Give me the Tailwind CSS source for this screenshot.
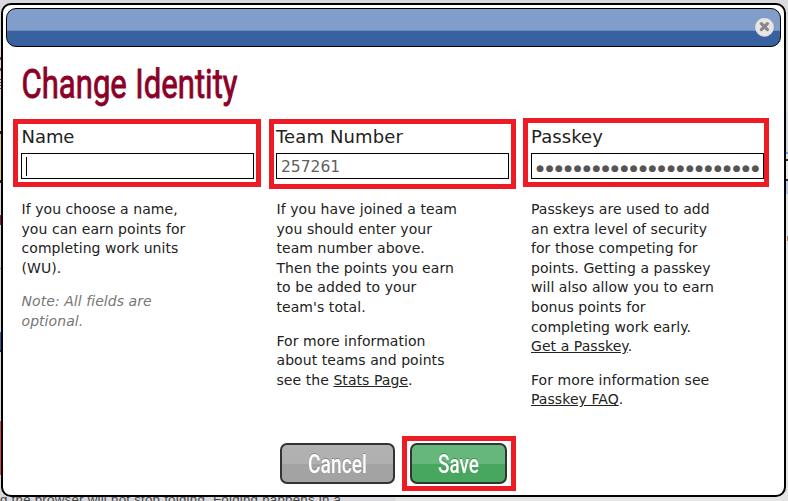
<!DOCTYPE html>
<html lang="en">
<head>
<meta charset="utf-8">
<title>Change Identity</title>
<script src="https://cdn.jsdelivr.net/npm/@tailwindcss/browser@4"></script>
</head>
<body class="relative w-[788px] h-[501px] overflow-hidden bg-[#e4e4e4] font-['DejaVu_Sans',sans-serif] text-[#222]">
  <!-- page behind the dialog -->
  <div class="absolute inset-0" aria-hidden="true">
    <div class="absolute left-0 top-0 w-full h-[130px] bg-[#dadadd]"></div>
    <div class="absolute left-0 bottom-0 w-[395px] h-[371px] bg-[#dadade]"></div>
    <svg class="absolute inset-0" width="788" height="501">
      <path d="M0 57h1v3h-1zM0 68h1v3h-1z" fill="#a33c30"/>
      <path d="M0 79h1v1h-1zM0 82h1v1h-1zM0 85h1v1h-1zM0 88h1v1h-1z" fill="#a02048"/>
      <path d="M0 131h1v3h-1zM0 180h1v3h-1z" fill="#222"/>
      <path d="M0 134h1v46h-1z" fill="#e0c97a"/>
      <path d="M0 215h1v10h-1z" fill="#a0153b"/>
      <path d="M0 268h1v1h-1z" fill="#5b87b8"/>
      <path d="M0 332h1v18h-1z" fill="#3a62a2"/>
      <path d="M0 350h1v2h-1z" fill="#222"/>
      <path d="M0 421h1v54h-1z" fill="#d84a4a"/>
      <path d="M786 112h2v40h-2z" fill="#d5d5dc"/>
      <path d="M786 152h2v2h-2z" fill="#82a3cf"/>
      <path d="M786 159h2v2h-2zM786 179h2v2h-2z" fill="#2b2b2b"/>
      <path d="M786 161h2v18h-2z" fill="#e8e8e8"/>
      <path d="M786 181h2v13h-2z" fill="#bcc6de"/>
      <path d="M787 236h1v5h-1z" fill="#b98445"/>
      <text x="0" y="504" font-family="Liberation Sans, sans-serif" font-size="13.3" fill="#444" textLength="341">g the browser will not stop folding. Folding happens in a</text>
    </svg>
  </div>

  <main class="relative ml-px mt-[3px] w-[785px] h-[494px] rounded-[10px] border-2 border-black bg-white pt-[3px] pl-[3px]">
    <header class="flex h-[39px] w-[775px] items-center justify-end rounded-[10px] border border-black bg-[linear-gradient(to_bottom,#819dca_0,#819dca_21px,#6b8bbf_21px,#6b8bbf_22px,#3861a0_22px)] pr-[6px]">
      <button aria-label="Close" class="block">
        <svg class="block" width="19" height="19" viewBox="0 0 19 19">
          <circle cx="9.5" cy="9.2" r="9.2" fill="#e6e6e6" stroke="#d3d3d3" stroke-width=".6"/>
          <path d="M6.4 5.6l6 6M12.4 5.6l-6 6" stroke="#888" stroke-width="3.2" stroke-linecap="round"/>
        </svg>
      </button>
    </header>

    <h1 class="ml-[15px] mt-[13px] h-[58px]">
      <svg class="block overflow-visible" width="220" height="58" font-family="Roboto, sans-serif" font-size="41" fill="#8c0028" stroke="#8c0028" stroke-width=".9">
        <text x="0.5" y="38" textLength="216" lengthAdjust="spacingAndGlyphs" word-spacing="1">Change Identity</text>
      </svg>
    </h1>

    <div class="ml-[15px] flex gap-[22px] text-[14px] leading-[19.6px] tracking-[0.06px]">
      <section class="w-[233px]">
        <div class="relative h-[82px]">
          <div class="absolute -left-[8px] top-[1px] h-[68px] w-[248px] border-[5px] border-[#ed1c24]"></div>
          <label class="block h-[35px] pt-[8px]"><svg class="block overflow-visible" width="90" height="22"><text x=".5" y="17" font-size="18" fill="#222" textLength="53">Name</text></svg></label>
          <div class="relative flex h-[26px] items-center border border-black pl-[4px]"><span class="h-[19px] w-px bg-black"></span></div>
        </div>
        <div class="whitespace-nowrap pl-[0.5px]">
          <p>If you choose a name,<br>you can earn points for<br>completing work units<br>(WU).</p>
          <p class="mt-[14px] italic text-[#777]">Note: All fields are<br>optional.</p>
        </div>
      </section>

      <section class="w-[233px]">
        <div class="relative h-[82px]">
          <div class="absolute -left-[7px] top-[1px] h-[70px] w-[247px] border-[5px] border-[#ed1c24]"></div>
          <label class="block h-[35px] pt-[8px]"><svg class="block overflow-visible" width="140" height="22"><text y="17" font-size="18" fill="#222" textLength="127">Team Number</text></svg></label>
          <div class="relative flex h-[26px] items-center border border-black pl-[4px] pt-[3px] text-[15.5px] tracking-normal text-[#606060]">257261</div>
        </div>
        <div class="whitespace-nowrap pl-[0.5px]">
          <p>If you have joined a team<br>you should enter your<br>team number above.<br>Then the points you earn<br>to be added to your<br>team's total.</p>
          <p class="mt-[14px]">For more information<br>about teams and points<br>see the <a class="underline">Stats Page</a>.</p>
        </div>
      </section>

      <section class="w-[233px]">
        <div class="relative h-[82px]">
          <div class="absolute -left-[8px] top-0 h-[69px] w-[246px] border-[5px] border-[#ed1c24]"></div>
          <label class="block h-[35px] pt-[8px]"><svg class="block overflow-visible" width="90" height="22"><text y="17" font-size="18" fill="#222" textLength="72">Passkey</text></svg></label>
          <div class="relative h-[26px] border border-black pl-[4px]">
            <svg class="block" width="226" height="24"><text x="0.3" y="16.5" font-size="9" fill="#555" textLength="223">●●●●●●●●●●●●●●●●●●●●●●●●</text></svg>
          </div>
        </div>
        <div class="whitespace-nowrap">
          <p>Passkeys are used to add<br>an extra level of security<br>for those competing for<br>points. Getting a passkey<br>will also allow you to earn<br>bonus points for<br>completing work early.<br><a class="underline">Get a Passkey</a>.</p>
          <p class="mt-[14px]">For more information see<br><a class="underline">Passkey FAQ</a>.</p>
        </div>
      </section>
    </div>

    <footer class="absolute left-[277px] top-[438px] flex gap-[15px]">
      <button class="h-[41px] w-[115px] rounded-[7px] border-2 border-[#333] bg-[linear-gradient(to_bottom,#b2b2b2_0,#b0b0b0_19px,#a3a3a3_19px)]">
        <svg class="block overflow-visible drop-shadow-[0_-1px_0_#888]" width="111" height="37"><text x="26" y="27.5" font-family="Roboto, sans-serif" font-weight="500" font-size="25" fill="#fff" textLength="59" lengthAdjust="spacingAndGlyphs">Cancel</text></svg>
      </button>
      <div class="relative">
        <div class="absolute -left-[8px] -top-[7px] h-[55px] w-[114px] border-[5px] border-[#ed1c24]"></div>
        <button class="relative block h-[41px] w-[97px] rounded-[7px] border-2 border-[#333] bg-[linear-gradient(to_bottom,#65b77b_0,#65b77b_19px,#48a75f_19px)]">
          <svg class="block overflow-visible drop-shadow-[0_-1px_0_#3f8f54]" width="93" height="37"><text x="26" y="27.5" font-family="Roboto, sans-serif" font-weight="500" font-size="25" fill="#fff" textLength="41" lengthAdjust="spacingAndGlyphs">Save</text></svg>
        </button>
      </div>
    </footer>
  </main>
</body>
</html>
